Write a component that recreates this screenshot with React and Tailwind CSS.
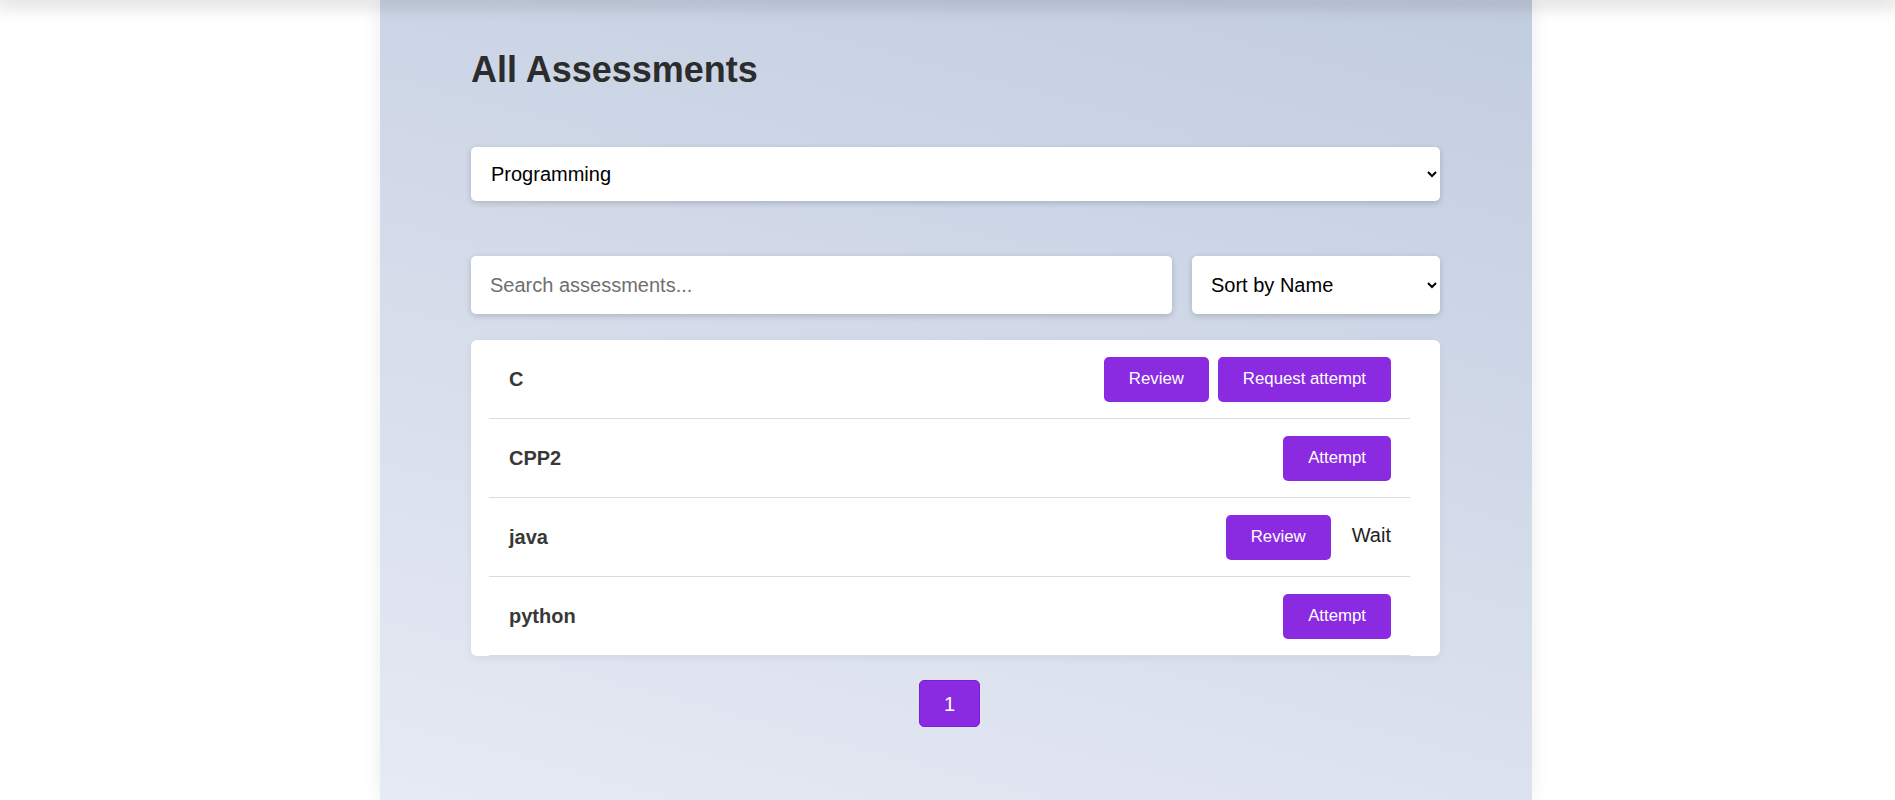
import React, { useState } from "react";

const assessments = [
  { name: "C", actions: ["Review", "Request attempt"] },
  { name: "CPP2", actions: ["Attempt"] },
  { name: "java", actions: ["Review"], status: "Wait" },
  { name: "python", actions: ["Attempt"] },
];

function ActionButton({ label }) {
  return (
    <button className="h-[45px] rounded-[5px] bg-[#8a2be2] px-[25px] text-[16.8px] text-white">
      {label}
    </button>
  );
}

export default function App() {
  const [query, setQuery] = useState("");

  return (
    <div className="min-h-screen bg-white font-['Liberation_Sans',Arial,sans-serif]">
      {/* shadow of the header that sits above the viewport */}
      <div className="relative z-10 h-0 shadow-[0_0_18px_5px_rgba(0,0,0,0.2)]" />

      <div className="ml-[380px] min-h-[800px] w-[1152px] bg-[linear-gradient(195deg,#c2cde0_0%,#e6eaf4_100%)] shadow-[0_0_18px_rgba(0,0,0,0.08)]">
        <div className="ml-[91px] w-[969px] pt-[50px] pb-[60px]">
          <h1 className="text-[36px] font-bold leading-[40px] text-[#2c2c2c]">
            All Assessments
          </h1>

          <select
            defaultValue="Programming"
            className="mt-[57px] h-[54px] w-full rounded-[5px] bg-white pl-4 pr-2 text-[20px] text-black shadow-[0_2px_6px_rgba(0,0,0,0.18)] outline-none"
          >
            <option>Programming</option>
            <option>Design</option>
            <option>Marketing</option>
          </select>

          <div className="mt-[55px] flex gap-5">
            <input
              value={query}
              onChange={(e) => setQuery(e.target.value)}
              placeholder="Search assessments..."
              className="h-[58px] w-[701px] rounded-[5px] bg-white px-[19px] text-[20px] text-black shadow-[0_2px_6px_rgba(0,0,0,0.18)] outline-none placeholder:text-[#6f6f6f]"
            />
            <select
              defaultValue="name"
              className="h-[58px] w-[248px] rounded-[5px] bg-white pl-[15px] pr-2 text-[20px] text-black shadow-[0_2px_6px_rgba(0,0,0,0.18)] outline-none"
            >
              <option value="name">Sort by Name</option>
              <option value="date">Sort by Date</option>
            </select>
          </div>

          <div className="mt-[26px] rounded-[6px] bg-white pl-[18px] pr-[30px] shadow-[0_2px_8px_rgba(0,0,0,0.06)]">
            {assessments.map((a) => (
              <div
                key={a.name}
                className="flex h-[79px] items-center justify-between border-b border-[#dcdcdc] pl-5 pr-[19px]"
              >
                <span className="text-[20px] font-bold text-[#383838]">
                  {a.name}
                </span>
                <div className="flex items-center gap-[9px]">
                  {a.actions.map((label) => (
                    <ActionButton key={label} label={label} />
                  ))}
                  {a.status ? (
                    <span className="ml-3 -mt-[4px] text-[20px] text-[#1f1f1f]">
                      {a.status}
                    </span>
                  ) : null}
                </div>
              </div>
            ))}
          </div>

          <div className="mt-6 flex pl-[448px]">
            <button className="h-[47px] w-[61px] rounded-[5px] border border-[#7a1fd6] bg-[#8a2be2] text-[20px] text-white">
              1
            </button>
          </div>
        </div>
      </div>
    </div>
  );
}
